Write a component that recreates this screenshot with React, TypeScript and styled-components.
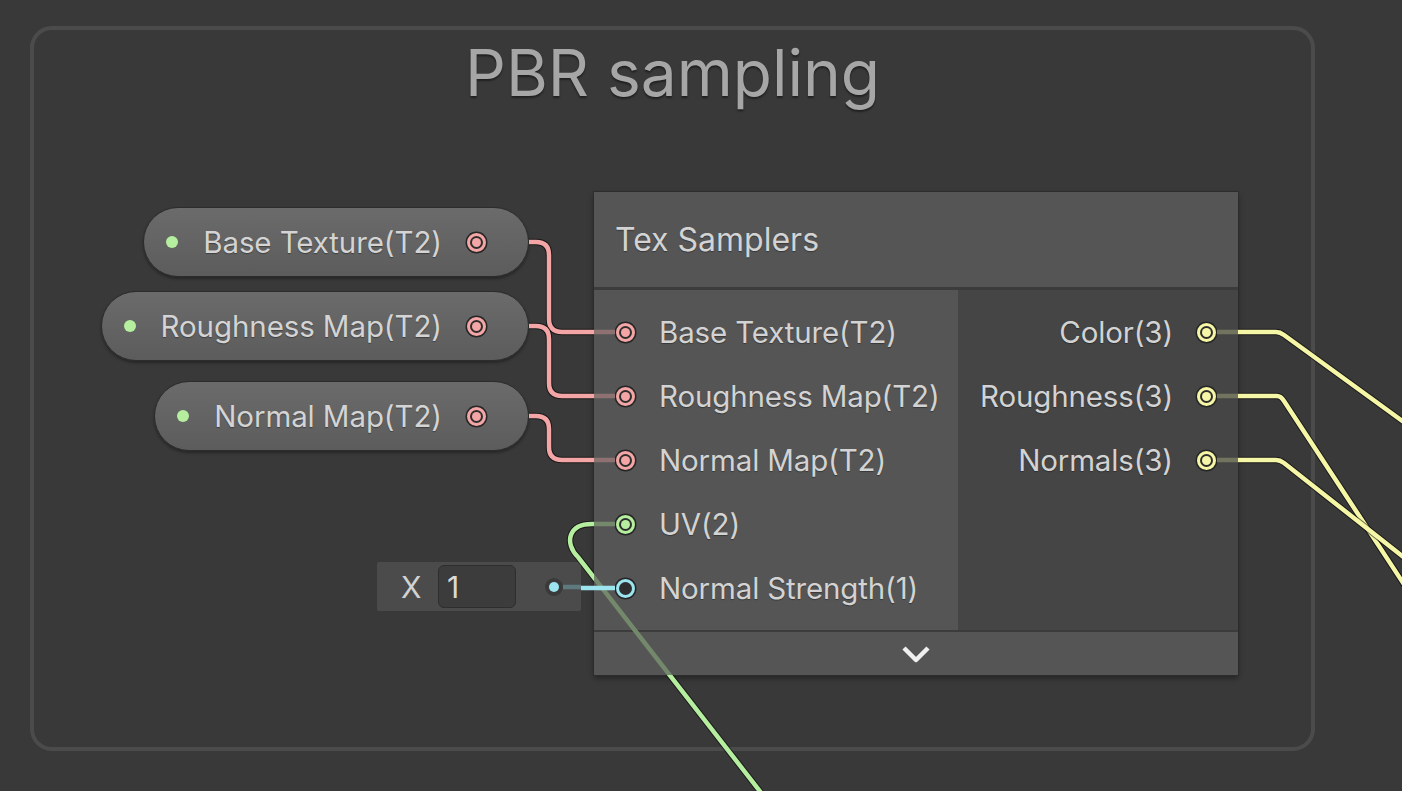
import styled, { createGlobalStyle } from 'styled-components'

const GlobalStyle = createGlobalStyle`
	html, body {
		margin: 0;
		padding: 0;
		background: #393939;
		overflow: hidden;
	}
	* {
		box-sizing: border-box;
	}
`

const PINK = '#f4a6a6'
const YELLOW = '#f6f7a6'
const GREEN = '#b6ee9f'
const CYAN = '#9ce4ee'

const Canvas = styled.div`
	position: relative;
	width: 1402px;
	height: 791px;
	overflow: hidden;
	background: #393939;
	font-family: Inter, 'Noto Sans', sans-serif;
`

const GroupFrame = styled.div`
	position: absolute;
	left: 30px;
	top: 26px;
	width: 1285px;
	height: 725px;
	border: 4px solid #4b4b4b;
	border-radius: 22px;
`

const GroupTitle = styled.h1`
	margin: 0;
	padding-top: 11px;
	text-align: center;
	font-weight: 400;
	font-size: 64px;
	line-height: 64px;
	color: #a6a6a6;
	text-shadow: 0 2px 2px rgba(0, 0, 0, 0.45);
`

const PropertyPill = styled.div<{ $top: number }>`
	position: absolute;
	top: ${(p) => p.$top}px;
	right: 873px;
	height: 70px;
	display: flex;
	align-items: center;
	padding: 0 42px 0 22px;
	border-radius: 35px;
	border: 1px solid #2c2c2c;
	background: linear-gradient(#6b6b6b, #5c5c5c);
	box-shadow: 0 2px 3px rgba(0, 0, 0, 0.35);
	font-size: 29.5px;
	letter-spacing: -0.1px;
	color: #d4d4d4;
	text-shadow: 0 1px 1px rgba(0, 0, 0, 0.35);
	white-space: nowrap;
`

const PillDot = styled.span`
	width: 12px;
	height: 12px;
	border-radius: 50%;
	background: ${GREEN};
	margin-right: 25px;
	flex: none;
`

const PillLabel = styled.span`
	margin-right: 25px;
`

const PortRing = styled.span<{ $color: string; $filled?: boolean }>`
	box-sizing: content-box;
	width: 13px;
	height: 13px;
	border: 3px solid ${(p) => p.$color};
	border-radius: 50%;
	background: #2e2e2e;
	box-shadow: 0 0 0 1.5px #262626;
	display: grid;
	place-items: center;
	flex: none;

	&::after {
		content: '';
		width: 9px;
		height: 9px;
		border-radius: 50%;
		background: ${(p) => (p.$filled ? p.$color : 'transparent')};
	}
`

const NodeCard = styled.div`
	position: absolute;
	left: 594px;
	top: 192px;
	width: 644px;
	background: #555555;
	box-shadow: 0 0 0 1px #2c2c2c, 0 3px 6px rgba(0, 0, 0, 0.4);
	color: #d3d3d3;
	text-shadow: 0 1px 1px rgba(0, 0, 0, 0.35);
`

const NodeHeader = styled.div`
	height: 98px;
	display: flex;
	align-items: center;
	padding-left: 21px;
	font-size: 32px;
	border-bottom: 3px solid #3c3c3c;
`

const NodeBody = styled.div`
	display: grid;
	grid-template-columns: 364px 1fr;
	border-bottom: 2px solid #3c3c3c;
`

const PortColumn = styled.div<{ $output?: boolean }>`
	padding: 10px 0;
	background: ${(p) => (p.$output ? '#454545' : '#555555')};
`

const PortRow = styled.div<{ $output?: boolean }>`
	height: 64px;
	display: flex;
	align-items: center;
	justify-content: ${(p) => (p.$output ? 'flex-end' : 'flex-start')};
	gap: 24px;
	padding: 0 22px;
	font-size: 29.5px;
	letter-spacing: -0.15px;
	white-space: nowrap;
`

const NodeFooter = styled.div`
	height: 43px;
	display: grid;
	place-items: center;
`

const InlineField = styled.div`
	position: absolute;
	left: 377px;
	top: 562px;
	width: 204px;
	height: 49px;
	display: flex;
	align-items: center;
	padding: 0 18px 0 24px;
	background: #4b4b4b;
	border-radius: 2px;
	font-size: 30px;
	color: #d2d2d2;
`

const FieldLabel = styled.span`
	width: 37px;
`

const FieldInput = styled.div`
	width: 78px;
	height: 43px;
	display: flex;
	align-items: center;
	padding-left: 8px;
	background: #3c3c3c;
	border: 1px solid #2e2e2e;
	border-radius: 6px;
	color: #dadada;
`

const FieldPort = styled.span`
	margin-left: auto;
	width: 18px;
	height: 18px;
	border-radius: 50%;
	background: #3a3a3a;
	display: grid;
	place-items: center;

	&::after {
		content: '';
		width: 10px;
		height: 10px;
		border-radius: 50%;
		background: ${CYAN};
	}
`

const WireLayer = styled.svg`
	position: absolute;
	left: 0;
	top: 0;
	pointer-events: none;
`

const pills = [
	{ top: 207, label: 'Base Texture(T2)' },
	{ top: 291, label: 'Roughness Map(T2)' },
	{ top: 381, label: 'Normal Map(T2)' },
]

const inputs = [
	{ label: 'Base Texture(T2)', color: PINK, filled: true },
	{ label: 'Roughness Map(T2)', color: PINK, filled: true },
	{ label: 'Normal Map(T2)', color: PINK, filled: true },
	{ label: 'UV(2)', color: GREEN, filled: true },
	{ label: 'Normal Strength(1)', color: CYAN, filled: false },
]

const outputs = ['Color(3)', 'Roughness(3)', 'Normals(3)']

const pinkWires = [
	'M 529 242 H 536 Q 549 242 549 255 V 319 Q 549 332 562 332 H 594',
	'M 529 326 H 536 Q 549 326 549 339 V 383 Q 549 396 562 396 H 594',
	'M 529 416 H 536 Q 549 416 549 429 V 447 Q 549 460 562 460 H 594',
]

const yellowWires = [
	'M 1238 332 H 1276 Q 1280 332 1284 335 L 1430 441',
	'M 1238 396 H 1277 Q 1281 396 1284 401 L 1430 624',
	'M 1238 460 H 1276 Q 1280 460 1284 463 L 1430 578',
]

const uvWire = 'M 594 524 C 568 523 564 543 578 557 L 790 830'

const Wire = ({ d, color }: { d: string; color: string }) => (
	<>
		<path d={d} stroke="rgba(0,0,0,0.55)" strokeWidth={6.5} fill="none" />
		<path d={d} stroke={color} strokeWidth={4.5} fill="none" />
	</>
)

const Chevron = () => (
	<svg width="32" height="22" viewBox="0 0 32 22">
		<polyline points="4,5 16,17 28,5" fill="none" stroke="#f0f0f0" strokeWidth="4.5" strokeLinejoin="round" />
	</svg>
)

export default function App() {
	return (
		<Canvas>
			<GlobalStyle />
			<GroupFrame>
				<GroupTitle>PBR sampling</GroupTitle>
			</GroupFrame>

			{pills.map((pill) => (
				<PropertyPill key={pill.label} $top={pill.top}>
					<PillDot />
					<PillLabel>{pill.label}</PillLabel>
					<PortRing $color={PINK} $filled />
				</PropertyPill>
			))}

			<NodeCard>
				<NodeHeader>Tex Samplers</NodeHeader>
				<NodeBody>
					<PortColumn>
						{inputs.map((input) => (
							<PortRow key={input.label}>
								<PortRing $color={input.color} $filled={input.filled} />
								<span>{input.label}</span>
							</PortRow>
						))}
					</PortColumn>
					<PortColumn $output>
						{outputs.map((label) => (
							<PortRow key={label} $output>
								<span>{label}</span>
								<PortRing $color={YELLOW} $filled />
							</PortRow>
						))}
					</PortColumn>
				</NodeBody>
				<NodeFooter>
					<Chevron />
				</NodeFooter>
			</NodeCard>

			<InlineField>
				<FieldLabel>X</FieldLabel>
				<FieldInput>1</FieldInput>
				<FieldPort />
			</InlineField>

			<WireLayer width="1402" height="791" viewBox="0 0 1402 791">
				<defs>
					<clipPath id="in-node">
						<rect x="594" y="192" width="644" height="483" />
					</clipPath>
					<mask id="out-node">
						<rect x="0" y="0" width="1402" height="791" fill="white" />
						<rect x="594" y="192" width="644" height="483" fill="black" />
					</mask>
				</defs>

				<g mask="url(#out-node)">
					<Wire d={uvWire} color={GREEN} />
				</g>
				<path d={uvWire} clipPath="url(#in-node)" stroke="#74896c" strokeWidth={4.5} fill="none" />

				{pinkWires.map((d) => (
					<Wire key={d} d={d} color={PINK} />
				))}
				{[332, 396, 460].map((y) => (
					<line key={y} x1={594} y1={y} x2={615} y2={y} stroke="#8e7272" strokeWidth={4.5} />
				))}
				<line x1={594} y1={524} x2={615} y2={524} stroke="#74896c" strokeWidth={4.5} />

				<line x1={563} y1={587} x2={581} y2={587} stroke="#5e7a7e" strokeWidth={4.5} />
				<line x1={581} y1={588} x2={615} y2={588} stroke={CYAN} strokeWidth={4.5} />

				{[332, 396, 460].map((y) => (
					<line key={y} x1={1217} y1={y} x2={1238} y2={y} stroke="#72745d" strokeWidth={4.5} />
				))}
				{yellowWires.map((d) => (
					<Wire key={d} d={d} color={YELLOW} />
				))}
			</WireLayer>
		</Canvas>
	)
}
